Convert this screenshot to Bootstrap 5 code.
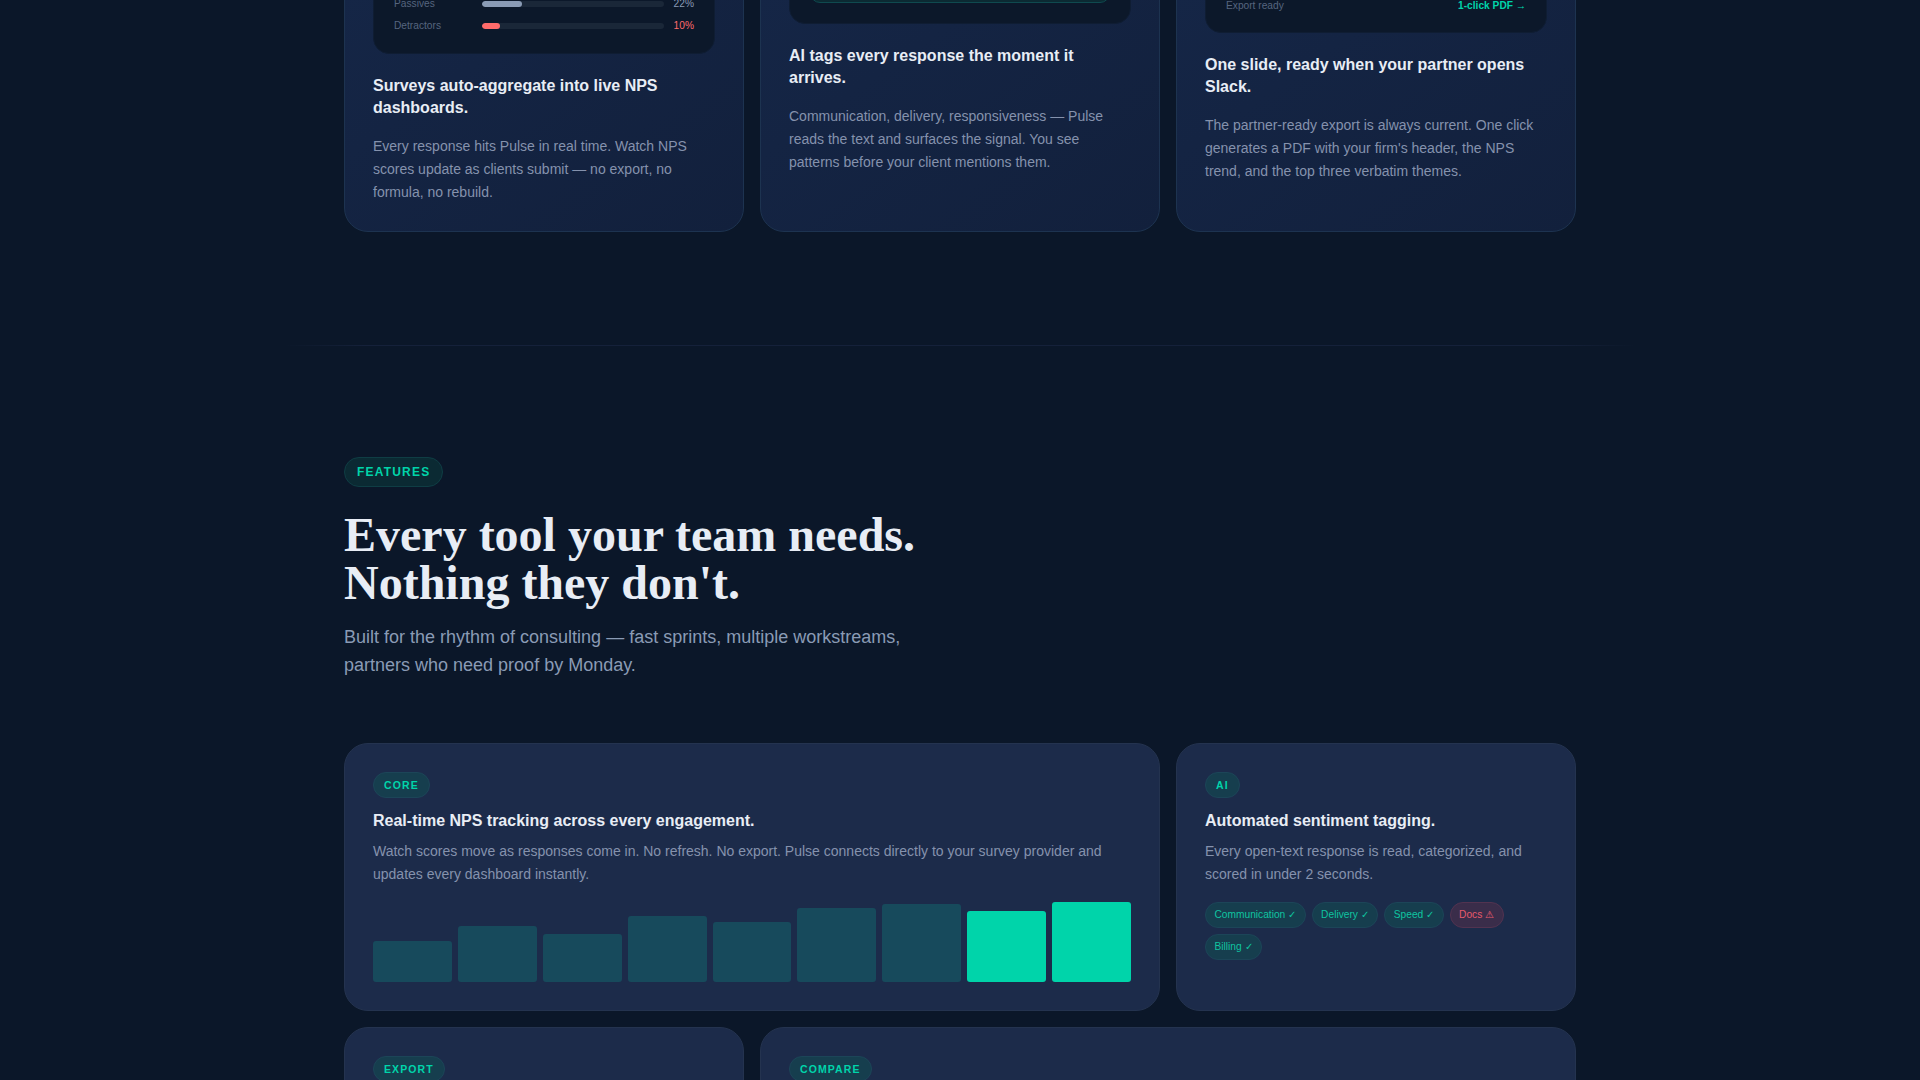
<!DOCTYPE html>
<html lang="en">
<head>
    <meta charset="UTF-8">
    <meta name="viewport" content="width=device-width, initial-scale=1.0">
    <title>Pulse</title>
    <link href="https://cdn.jsdelivr.net/npm/bootstrap@5.3.0/dist/css/bootstrap.min.css" rel="stylesheet">
    <style>
        html, body { height: 1080px; overflow: hidden; }
        body { background: #0b1729; font-family: "Liberation Sans", Arial, sans-serif; color: #e8edf5; }

        .page-wrap { width: 1232px; margin: 0 auto; }
        .grid-3 { display: grid; grid-template-columns: repeat(3, 400px); gap: 16px; }
        .span-2 { grid-column: span 2; }

        /* how-it-works cards, page is scrolled so the top of them is cut off */
        .how-row { margin-top: -200px; }
        .how-card { height: 432px; padding: 28px; background: linear-gradient(145deg, #16284a, #12203c); border: 1px solid #1d3350; border-radius: 24px; }
        .mock-panel { background: #0c182a; border: 1px solid #0f1d33; border-radius: 16px; padding: 0 20px; overflow: hidden; margin-bottom: 21px; }
        .mock-nps { height: 225px; padding-bottom: 16px; }
        .mock-tags { height: 195px; padding-bottom: 20px; }
        .mock-export { height: 204px; padding-bottom: 19px; }
        .nps-row { height: 22px; font-size: 10.2px; color: #56657f; }
        .nps-name { width: 88px; }
        .nps-track { flex: 1; height: 6px; border-radius: 3px; background: #1a2738; overflow: hidden; }
        .nps-fill { height: 6px; border-radius: 3px; }
        .nps-pct { width: 30px; text-align: right; }
        .fill-grey { background: #8a9bb5; }
        .fill-red { background: #ff6b6b; }
        .txt-red { color: #ff6b6b; }
        .txt-grey { color: #8a9bb5; }
        .mock-box { height: 100%; border: 1px solid #0f4a4f; border-radius: 10px; background: #0c2a33; }
        .export-row { font-size: 10.2px; color: #56657f; }
        .export-link { color: #00d4aa; font-weight: 700; }
        .how-title { font-size: 16px; line-height: 22px; font-weight: 700; color: #e8edf5; margin-bottom: 16px; }
        .how-text { font-size: 14px; line-height: 23px; color: #8592ad; margin: 0; }

        .fade-rule { height: 1px; width: 1352px; margin: 113px auto 0; background: linear-gradient(90deg, transparent, #15213a 6%, #15213a 94%, transparent); }

        .tag-pill { display: inline-block; font-size: 12px; font-weight: 700; letter-spacing: 1.2px; color: #00d4aa; background: #0b2a33; border: 1px solid #0f3d44; border-radius: 20px; padding: 6px 12px; line-height: 16px; }
        .section-head { margin-top: 111px; }
        .section-title { font-family: "Liberation Serif", "Times New Roman", serif; font-weight: 700; font-size: 48px; line-height: 48px; color: #e8edf5; margin: 24px 0 16px; }
        .section-sub { font-size: 18px; line-height: 28px; color: #8a9bb5; margin: 0; width: 600px; }

        .feat-grid { margin-top: 64px; }
        .feat-card { background: #1c2b4a; border: 1px solid #24334f; border-radius: 24px; padding: 28px; height: 268px; }
        .feat-badge { display: block; width: fit-content; font-size: 10.5px; font-weight: 700; letter-spacing: 1.1px; color: #00d4aa; background: #163e4e; border: 1px solid #1c4558; border-radius: 20px; padding: 5.5px 10px; line-height: 13px; margin-bottom: 12px; }
        .feat-title { font-size: 16px; line-height: 22px; font-weight: 700; color: #e8edf5; margin-bottom: 8px; }
        .feat-text { font-size: 14px; line-height: 23px; color: #8592ad; margin: 0; }
        .bar-chart { height: 80px; margin-top: 16px; gap: 6px; }
        .bar-item { flex: 1; border-radius: 3px; background: #174a5c; }
        .bar-on { background: #00d4aa; }
        .chip-list { margin-top: 16px; gap: 6px; }
        .chip { font-size: 10.2px; line-height: 14px; padding: 5px 8.5px; border-radius: 20px; color: #0fc4a0; background: #163e4e; border: 1px solid #1c4558; }
        .chip-warn { color: #e65a6c; background: #3a2d4a; border-color: #523350; }
    </style>
</head>
<body>
    <div class="page-wrap">
        <div class="grid-3 how-row">
            <div class="how-card">
                <div class="mock-panel mock-nps d-flex flex-column justify-content-end">
                    <div class="nps-row d-flex align-items-center">
                        <span class="nps-name">Passives</span>
                        <div class="nps-track"><div class="nps-fill fill-grey" style="width: 22%"></div></div>
                        <span class="nps-pct txt-grey">22%</span>
                    </div>
                    <div class="nps-row d-flex align-items-center">
                        <span class="nps-name">Detractors</span>
                        <div class="nps-track"><div class="nps-fill fill-red" style="width: 10%"></div></div>
                        <span class="nps-pct txt-red">10%</span>
                    </div>
                </div>
                <h3 class="how-title">Surveys auto-aggregate into live NPS dashboards.</h3>
                <p class="how-text">Every response hits Pulse in real time. Watch NPS scores update as clients submit — no export, no formula, no rebuild.</p>
            </div>
            <div class="how-card">
                <div class="mock-panel mock-tags"><div class="mock-box"></div></div>
                <h3 class="how-title">AI tags every response the moment it arrives.</h3>
                <p class="how-text">Communication, delivery, responsiveness — Pulse reads the text and surfaces the signal. You see patterns before your client mentions them.</p>
            </div>
            <div class="how-card">
                <div class="mock-panel mock-export d-flex flex-column justify-content-end">
                    <div class="export-row d-flex justify-content-between">
                        <span>Export ready</span>
                        <span class="export-link">1-click PDF →</span>
                    </div>
                </div>
                <h3 class="how-title">One slide, ready when your partner opens Slack.</h3>
                <p class="how-text">The partner-ready export is always current. One click generates a PDF with your firm's header, the NPS trend, and the top three verbatim themes.</p>
            </div>
        </div>
    </div>

    <div class="fade-rule"></div>

    <div class="page-wrap">
        <div class="section-head">
            <span class="tag-pill">FEATURES</span>
            <h2 class="section-title">Every tool your team needs.<br>Nothing they don't.</h2>
            <p class="section-sub">Built for the rhythm of consulting — fast sprints, multiple workstreams, partners who need proof by Monday.</p>
        </div>

        <div class="grid-3 feat-grid">
            <div class="feat-card span-2">
                <span class="feat-badge">CORE</span>
                <h3 class="feat-title">Real-time NPS tracking across every engagement.</h3>
                <p class="feat-text">Watch scores move as responses come in. No refresh. No export. Pulse connects directly to your survey provider and updates every dashboard instantly.</p>
                <div class="bar-chart d-flex align-items-end">
                    <div class="bar-item" style="height: 41px"></div>
                    <div class="bar-item" style="height: 56px"></div>
                    <div class="bar-item" style="height: 48px"></div>
                    <div class="bar-item" style="height: 66px"></div>
                    <div class="bar-item" style="height: 60px"></div>
                    <div class="bar-item" style="height: 74px"></div>
                    <div class="bar-item" style="height: 78px"></div>
                    <div class="bar-item bar-on" style="height: 71px"></div>
                    <div class="bar-item bar-on" style="height: 80px"></div>
                </div>
            </div>
            <div class="feat-card">
                <span class="feat-badge">AI</span>
                <h3 class="feat-title">Automated sentiment tagging.</h3>
                <p class="feat-text">Every open-text response is read, categorized, and scored in under 2 seconds.</p>
                <div class="d-flex flex-wrap chip-list">
                    <span class="chip">Communication ✓</span>
                    <span class="chip">Delivery ✓</span>
                    <span class="chip">Speed ✓</span>
                    <span class="chip chip-warn">Docs ⚠</span>
                    <span class="chip">Billing ✓</span>
                </div>
            </div>
            <div class="feat-card">
                <span class="feat-badge">EXPORT</span>
            </div>
            <div class="feat-card span-2">
                <span class="feat-badge">COMPARE</span>
            </div>
        </div>
    </div>

    <script src="https://cdn.jsdelivr.net/npm/bootstrap@5.3.0/dist/js/bootstrap.bundle.min.js"></script>
</body>
</html>
